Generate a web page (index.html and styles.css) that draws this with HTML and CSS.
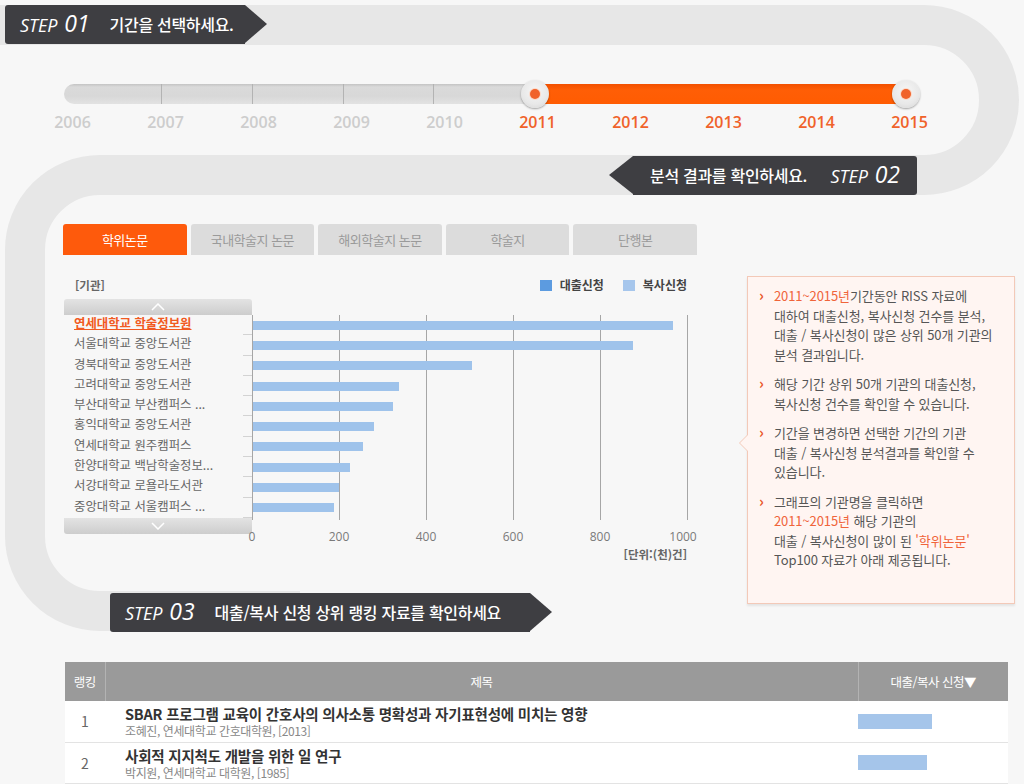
FILE: index.html
```html
<!DOCTYPE html>
<html lang="ko">
<head>
<meta charset="utf-8">
<title>기관별 대출/복사 신청 분석</title>
<link rel="stylesheet" href="styles.css">
</head>
<body>
<div class="page">
  <svg class="track" width="1024" height="784" viewBox="0 0 1024 784" aria-hidden="true">
    <path d="M -20 25 H 924 A 75 75 0 0 1 924 175 H 100 A 75 75 0 0 0 25 250 V 536 A 75 75 0 0 0 100 611 H 300" fill="none" stroke="#e7e7e7" stroke-width="40"/>
  </svg>

  <div class="content">
    <div class="step1">
      <div class="step-label arrow-right s1">
        <span class="step-no">STEP <b>01</b></span>
        <span class="step-text">기간을 선택하세요.</span>
      </div>
    </div>

    <div class="slider">
      <span class="tick t1"></span><span class="tick t2"></span><span class="tick t3"></span><span class="tick t4"></span>
      <div class="range"></div>
      <span class="handle h1"><i></i></span>
      <span class="handle h2"><i></i></span>
    </div>
    <div class="years">
      <span class="year">2006</span><span class="year">2007</span><span class="year">2008</span><span class="year">2009</span><span class="year">2010</span>
      <span class="year on">2011</span><span class="year on">2012</span><span class="year on">2013</span><span class="year on">2014</span><span class="year on">2015</span>
    </div>

    <div class="step2">
      <div class="step-label arrow-left s2">
        <span class="step-text">분석 결과를 확인하세요.</span>
        <span class="step-no">STEP <b>02</b></span>
      </div>
    </div>

    <div class="main">
      <div class="left">
        <ul class="tabs">
          <li class="tab on">학위논문</li>
          <li class="tab">국내학술지 논문</li>
          <li class="tab">해외학술지 논문</li>
          <li class="tab">학술지</li>
          <li class="tab">단행본</li>
        </ul>

        <div class="chart">
          <div class="chart-head">
            <span class="org-title">[기관]</span>
            <div class="legend">
              <span class="sw loan"></span><span class="lg-text">대출신청</span>
              <span class="sw copy"></span><span class="lg-text">복사신청</span>
            </div>
          </div>
          <div class="chart-body">
            <div class="orgs">
              <div class="scroll up"><svg width="14" height="8" viewBox="0 0 14 8"><polyline points="1,7 7,1 13,7" fill="none" stroke="#fff" stroke-width="1.5"/></svg></div>
              <ul class="org-list">
                <li class="on">연세대학교 학술정보원</li>
                <li>서울대학교 중앙도서관</li>
                <li>경북대학교 중앙도서관</li>
                <li>고려대학교 중앙도서관</li>
                <li>부산대학교 부산캠퍼스 ...</li>
                <li>홍익대학교 중앙도서관</li>
                <li>연세대학교 원주캠퍼스</li>
                <li>한양대학교 백남학술정보...</li>
                <li>서강대학교 로욜라도서관</li>
                <li>중앙대학교 서울캠퍼스 ...</li>
              </ul>
              <div class="scroll down"><svg width="14" height="8" viewBox="0 0 14 8"><polyline points="1,1 7,7 13,1" fill="none" stroke="#fff" stroke-width="1.5"/></svg></div>
            </div>
            <div class="plot">
              <div class="bars">
                <div class="bar-row"><span class="bar" style="width:420px"></span></div>
                <div class="bar-row"><span class="bar" style="width:380px"></span></div>
                <div class="bar-row"><span class="bar" style="width:219px"></span></div>
                <div class="bar-row"><span class="bar" style="width:146px"></span></div>
                <div class="bar-row"><span class="bar" style="width:140px"></span></div>
                <div class="bar-row"><span class="bar" style="width:121px"></span></div>
                <div class="bar-row"><span class="bar" style="width:110px"></span></div>
                <div class="bar-row"><span class="bar" style="width:97px"></span></div>
                <div class="bar-row"><span class="bar" style="width:86px"></span></div>
                <div class="bar-row"><span class="bar" style="width:81px"></span></div>
              </div>
              <div class="axis">
                <span>0</span><span>200</span><span>400</span><span>600</span><span>800</span><span class="last">1000</span>
              </div>
              <div class="unit">[단위:(천)건]</div>
            </div>
          </div>
        </div>

        <div class="step-label arrow-right s3">
          <span class="step-no">STEP <b>03</b></span>
          <span class="step-text">대출/복사 신청 상위 랭킹 자료를 확인하세요</span>
        </div>
      </div>

      <aside class="info">
        <ul>
          <li><em>2011~2015년</em>기간동안 RISS 자료에<br>대하여 대출신청, 복사신청 건수를 분석,<br>대출 / 복사신청이 많은 상위 50개 기관의<br>분석 결과입니다.</li>
          <li>해당 기간 상위 50개 기관의 대출신청,<br>복사신청 건수를 확인할 수 있습니다.</li>
          <li>기간을 변경하면 선택한 기간의 기관<br>대출 / 복사신청 분석결과를 확인할 수<br>있습니다.</li>
          <li>그래프의 기관명을 클릭하면<br><em>2011~2015년</em> 해당 기관의<br>대출 / 복사신청이 많이 된 <em>'학위논문'</em><br>Top100 자료가 아래 제공됩니다.</li>
        </ul>
      </aside>
    </div>

    <table class="rank">
      <thead>
        <tr><th class="c-rank">랭킹</th><th class="c-title">제목</th><th class="c-count">대출/복사 신청▼</th></tr>
      </thead>
      <tbody>
        <tr>
          <td class="c-rank">1</td>
          <td class="c-title"><strong>SBAR 프로그램 교육이 간호사의 의사소통 명확성과 자기표현성에 미치는 영향</strong><span>조혜진, 연세대학교 간호대학원, [2013]</span></td>
          <td class="c-count"><span class="tbar" style="width:74px"></span></td>
        </tr>
        <tr>
          <td class="c-rank">2</td>
          <td class="c-title"><strong>사회적 지지척도 개발을 위한 일 연구</strong><span>박지원, 연세대학교 대학원, [1985]</span></td>
          <td class="c-count"><span class="tbar" style="width:69px"></span></td>
        </tr>
      </tbody>
    </table>
  </div>
</div>
</body>
</html>
```

FILE: styles.css
```css
* { box-sizing: border-box; margin: 0; padding: 0; }
html, body { width: 1024px; height: 784px; }
body {
  background: #f7f7f7;
  font-family: "Noto Sans CJK KR", "Noto Sans", sans-serif;
  color: #555;
  overflow: hidden;
}
ul { list-style: none; }
.page { position: relative; width: 1024px; height: 784px; overflow: hidden; }
.track { position: absolute; left: 0; top: 0; z-index: 0; }
.content { position: relative; z-index: 1; }

/* step labels */
.step-label {
  position: relative;
  display: flex;
  align-items: center;
  height: 39px;
  background: #3e3e42;
  color: #fff;
  white-space: nowrap;
}
.arrow-right::after {
  content: "";
  position: absolute;
  left: 100%;
  top: 0;
  border-left: 22px solid #3e3e42;
  border-top: 19.5px solid transparent;
  border-bottom: 19.5px solid transparent;
}
.arrow-left::before {
  content: "";
  position: absolute;
  right: 100%;
  top: 0;
  border-right: 24px solid #3e3e42;
  border-top: 19.5px solid transparent;
  border-bottom: 19.5px solid transparent;
}
.step-no {
  font-family: "Open Sans", sans-serif;
  font-style: italic;
  font-size: 18px;
  line-height: 39px;
}
.step-no b { font-size: 23px; font-weight: 400; margin-left: 2px; }
.step-text { font-size: 16px; font-weight: 500; line-height: 39px; letter-spacing: -0.3px; }

.step1 { height: 44px; padding: 5px 0 0 5px; }
.s1 { width: 240px; padding-left: 15px; border-radius: 3px 0 0 3px; }
.s1 .step-text { margin-left: 20px; }

/* slider */
.slider {
  position: relative;
  margin: 40px 0 0 64px;
  width: 850px;
  height: 20px;
  border-radius: 10px;
  background: linear-gradient(#c4c4c4 0, #dadada 3px, #d8d8d8 60%, #e2e2e2 100%);
}
.tick { position: absolute; top: 0; width: 1px; height: 20px; background: #b3b3b3; }
.t1 { left: 97px; } .t2 { left: 188px; } .t3 { left: 279px; } .t4 { left: 369px; }
.range {
  position: absolute;
  left: 471px;
  top: 0;
  width: 371px;
  height: 20px;
  background: linear-gradient(#f25000, #ff5e06 30%, #ff5c02);
}
.handle {
  position: absolute;
  top: -4px;
  width: 28px;
  height: 28px;
  border-radius: 50%;
  background: radial-gradient(circle at 50% 40%, #f6f6f6 0, #e8e8e8 60%, #d2d2d2 100%);
  box-shadow: 0 1px 2px rgba(0,0,0,0.35);
  display: flex;
  align-items: center;
  justify-content: center;
}
.handle i {
  width: 10px;
  height: 10px;
  border-radius: 50%;
  background: #f0622a;
  box-shadow: 0 0 0 1px #fbd9c9;
}
.h1 { left: 457px; }
.h2 { left: 828px; }

.years { display: flex; margin: 8px 0 0 26px; }
.year {
  width: 93px;
  text-align: center;
  font-family: "Open Sans", sans-serif;
  font-weight: 600;
  font-size: 16px;
  line-height: 20px;
  color: #cdcdcd;
}
.year.on { color: #f0622a; }

.step2 { display: flex; justify-content: flex-end; margin-top: 24px; padding-right: 107px; }
.s2 { width: 284px; padding: 0 17px; justify-content: space-between; border-radius: 0 3px 3px 0; }

/* main row */
.main { display: flex; margin-top: 29px; padding-left: 63px; }
.left { width: 634px; }

.tabs { display: flex; gap: 4px; }
.tab {
  width: 124px;
  height: 31px;
  line-height: 31px;
  text-align: center;
  background: #dcdcdc;
  color: #9a9a9a;
  font-size: 13px;
  letter-spacing: -0.5px;
  border-radius: 3px 3px 0 0;
}
.tab.on { background: #fe5a0c; color: #fff; }

.chart-head {
  display: flex;
  height: 44px;
  padding: 21px 10px 0 12px;
  line-height: 18px;
}
.org-title { font-size: 11.5px; font-weight: 700; color: #666; }
.legend { margin-left: auto; display: flex; align-items: center; height: 18px; }
.sw { width: 12px; height: 11px; }
.sw.loan { background: #5c9be0; }
.sw.copy { background: #a6c6ec; margin-left: 19px; }
.lg-text { margin-left: 8px; font-size: 12px; font-weight: 700; color: #444; }

.chart-body { display: flex; padding-left: 1px; }
.orgs { width: 188px; flex-shrink: 0; }
.scroll {
  height: 16px;
  display: flex;
  align-items: center;
  justify-content: center;
  background: linear-gradient(#e3e3e3, #cdcdcd);
}
.scroll.up { border-radius: 3px 3px 0 0; }
.scroll.down { border-radius: 0 0 3px 3px; }
.org-list li {
  position: relative;
  height: 20.3px;
  line-height: 17.3px;
  padding-left: 10px;
  font-size: 12.4px;
  color: #666;
  white-space: nowrap;
}
.org-list li::after {
  content: "";
  position: absolute;
  right: 0;
  bottom: 0;
  width: 9px;
  height: 1px;
  background: #d3d3d3;
}
.org-list li.on { color: #f15a22; font-weight: 700; text-decoration: underline; }

.plot { width: 436px; flex-shrink: 0; padding-top: 16px; }
.bars {
  height: 205px;
  background: repeating-linear-gradient(to right, #a6a6a6 0, #a6a6a6 1px, transparent 1px, transparent 87px);
}
.bar-row { height: 20.3px; display: flex; align-items: center; }
.bar { display: block; height: 9px; margin-left: 1px; background: #9fc3eb; }
.axis { display: flex; margin: 8px 0 0 -43.5px; }
.axis span {
  flex: 0 0 87px;
  text-align: center;
  font-family: "Open Sans", sans-serif;
  font-size: 12px;
  line-height: 18px;
  color: #7a7a7a;
}
.axis span.last { text-indent: -8px; }
.unit {
  text-align: right;
  padding-right: 1px;
  font-size: 11.5px;
  font-weight: 700;
  line-height: 16px;
  color: #666;
}

.s3 { width: 420px; margin: 31px 0 0 47px; padding-left: 15px; border-radius: 3px 0 0 3px; }
.s3 .step-text { margin-left: 20px; }

/* info box */
.info {
  position: relative;
  flex-shrink: 0;
  width: 268px;
  height: 328px;
  margin: 52px 0 0 50px;
  padding: 9px 0 0 26px;
  background: #fff5f2;
  border: 1px solid #f3c9b8;
  box-shadow: 0 2px 2px rgba(0,0,0,0.08);
}
.info::before {
  content: "";
  position: absolute;
  left: -9px;
  top: 157px;
  border-right: 9px solid #f3c9b8;
  border-top: 9px solid transparent;
  border-bottom: 9px solid transparent;
}
.info::after {
  content: "";
  position: absolute;
  left: -8px;
  top: 158px;
  border-right: 8px solid #fff5f2;
  border-top: 8px solid transparent;
  border-bottom: 8px solid transparent;
}
.info li {
  position: relative;
  font-size: 13px;
  line-height: 19.5px;
  color: #555;
  white-space: nowrap;
  margin-bottom: 10px;
  letter-spacing: -0.1px;
}
.info li::before {
  content: "›";
  position: absolute;
  left: -15px;
  top: -1px;
  font-weight: 700;
  font-size: 15px;
  color: #e9562a;
}
.info em { font-style: normal; color: #f0643a; }

/* table */
.rank {
  margin: 30px 0 0 65px;
  width: 943px;
  border-collapse: collapse;
  background: #fff;
}
.rank th {
  height: 39px;
  background: #9a9a9a;
  color: #fff;
  font-weight: 400;
  font-size: 12.5px;
  letter-spacing: -0.5px;
  border-left: 1px solid #b3b3b3;
}
.rank th:first-child { border-left: none; }
.rank .c-rank { width: 40px; }
.rank .c-count { width: 150px; }
.rank td { height: 41px; border-bottom: 1px solid #e3e3e3; vertical-align: middle; }
.rank td.c-rank { text-align: center; font-size: 14px; color: #666; }
.rank td.c-title { padding: 4px 0 3px 20px; }
.rank td.c-title strong {
  display: block;
  font-size: 14.5px;
  line-height: 18px;
  color: #333;
  letter-spacing: -0.2px;
}
.rank td.c-title span {
  display: block;
  font-size: 12px;
  line-height: 15px;
  color: #888;
  letter-spacing: -0.4px;
}
.rank td.c-count { padding: 0; }
.tbar { display: block; height: 15px; background: #a5c5ea; }
```
